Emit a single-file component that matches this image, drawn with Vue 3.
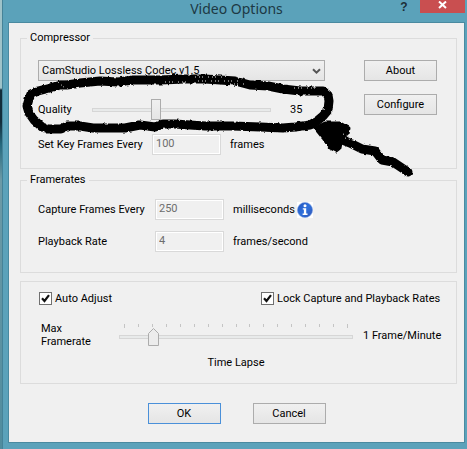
<script setup>
import { ref } from 'vue'

const codecs = ['CamStudio Lossless Codec v1.5', 'Microsoft Video 1', 'Cinepak Codec']
const codec = ref(codecs[0])
const quality = ref(35)
const keyFrames = ref(100)
const captureEvery = ref(250)
const playbackRate = ref(4)
const autoAdjust = ref(true)
const lockRates = ref(true)
const maxFramerate = ref(2)
</script>

<template>
	<div class="desktop">
		<div class="window">
			<header class="title-bar">
				<h1>Video Options</h1>
				<div class="window-buttons">
					<button type="button" class="help">?</button>
					<button type="button" class="close" aria-label="Close">
						<svg width="9" height="8" viewBox="0 0 9 8">
							<path d="M1 0.5L8 7M8 0.5L1 7" stroke="#fff" stroke-width="2" />
						</svg>
					</button>
				</div>
			</header>

			<form class="panel" @submit.prevent>
				<fieldset class="compressor">
					<legend>Compressor</legend>
					<div class="columns">
						<div class="settings">
							<div class="combo">
								<select v-model="codec" aria-label="Codec">
									<option v-for="name in codecs" :key="name">{{ name }}</option>
								</select>
								<svg class="chevron" width="9" height="7" viewBox="0 0 9 7">
									<path d="M1 1.2L4.5 4.7L8 1.2" fill="none" stroke="#555" stroke-width="2" />
								</svg>
							</div>
							<div class="row quality">
								<label for="quality">Quality</label>
								<input id="quality" type="range" min="0" max="100" v-model="quality" />
								<output for="quality">{{ quality }}</output>
							</div>
							<div class="row key-frames">
								<label for="keyFrames">Set Key Frames Every</label>
								<input id="keyFrames" type="text" v-model="keyFrames" disabled />
								<span>frames</span>
							</div>
						</div>
						<div class="actions">
							<button type="button">About</button>
							<button type="button">Configure</button>
						</div>
					</div>
				</fieldset>

				<fieldset class="framerates">
					<legend>Framerates</legend>
					<div class="row">
						<label for="capture">Capture Frames Every</label>
						<input id="capture" type="text" v-model="captureEvery" disabled />
						<span class="unit">milliseconds</span>
						<svg class="info" width="16" height="16" viewBox="0 0 16 16">
							<defs>
								<linearGradient id="infoFill" x1="0" y1="0" x2="1" y2="1">
									<stop offset="0" stop-color="#2454bd" />
									<stop offset="0.5" stop-color="#2f70dc" />
									<stop offset="1" stop-color="#3155b5" />
								</linearGradient>
							</defs>
							<rect width="16" height="16" fill="#fff" />
							<circle cx="8" cy="8" r="7.6" fill="url(#infoFill)" stroke="#7da0df" stroke-width="0.6" />
							<circle cx="8" cy="3.8" r="1.5" fill="#fff" />
							<path d="M5.8 6.3H9.2V11.6H10.5V13H5.6V11.6H6.9V7.6H5.8Z" fill="#fff" />
						</svg>
					</div>
					<div class="row">
						<label for="playback">Playback Rate</label>
						<input id="playback" type="text" v-model="playbackRate" disabled />
						<span>frames/second</span>
					</div>
				</fieldset>

				<fieldset class="adjust">
					<div class="checks">
						<label><input type="checkbox" v-model="autoAdjust" />Auto Adjust</label>
						<label class="lock"><input type="checkbox" v-model="lockRates" />Lock Capture and Playback Rates</label>
					</div>
					<div class="lapse">
						<label for="maxRate">Max<br />Framerate</label>
						<div class="scale">
							<div class="ticks">
								<i v-for="n in 17" :key="n"></i>
							</div>
							<input id="maxRate" class="pointed" type="range" min="0" max="16" v-model="maxFramerate" />
						</div>
						<span>1 Frame/Minute</span>
					</div>
					<p>Time Lapse</p>
				</fieldset>

				<div class="footer">
					<button type="submit" class="default">OK</button>
					<button type="button">Cancel</button>
				</div>
			</form>

			<!-- marker drawn over the quality slider -->
			<svg class="marker" width="400" height="110" viewBox="20 70 400 110">
				<defs>
					<filter id="rough" x="-5%" y="-10%" width="110%" height="120%">
						<feTurbulence type="fractalNoise" baseFrequency="0.3" numOctaves="2" seed="4" />
						<feDisplacementMap in="SourceGraphic" scale="3" xChannelSelector="R" yChannelSelector="G" />
					</filter>
				</defs>
				<g filter="url(#rough)" stroke-linejoin="round" stroke-linecap="round">
					<path
						class="ink"
						d="M31 94L38 91L50 88L60 85L67 85L80 83L100 81L118 82L133 80L160 80L185 79L205 79L220 80L235 81L250 85L268 86L283 89L300 91L323 91L328 95L329 101L328 110L323 116L317 121L310 125L295 127L283 128L260 127L233 126L205 126L190 125L175 124L163 124L155 127L140 125L125 128L112 128L93 128L80 126L67 126L61 129L48 129L42 127L34 120L29 113L27 106L29 99Z"
					/>
					<path
						class="head"
						d="M315 128L325 123L340 123L349 128L348 134L342 138L340 148L336 151L330 148L323 138Z"
					/>
					<path class="ink" d="M340 139L350 143L362 149L375 151L382 160L393 162L402 168L408 172" />
				</g>
				<path
					class="grain"
					d="M195 77H225M198 81H238M230 84H244M58 82L66 89M343 134L354 138M345 138L356 141M294 88H318M165 82H190"
				/>
			</svg>
		</div>
	</div>
</template>

<style>
body {
	margin: 0;
	background: #5ba2ba;
}
</style>

<style scoped>
.desktop {
	box-sizing: border-box;
	min-height: 100vh;
	padding-left: 2px;
	background: linear-gradient(#9fc3c9 0 88px, #122c3a 90px 122px, #26697e 145px, #6d9aa6 180px, #508c9e);
	font-family: Roboto, "Liberation Sans", sans-serif;
	font-size: 11px;
	line-height: 13px;
	color: #000;
}
.window {
	box-sizing: border-box;
	position: relative;
	min-height: 100vh;
	padding: 0 2px 6px 6px;
	background: #5ba2ba;
	box-shadow: inset 1px 0 #458398;
}
.title-bar {
	position: relative;
	height: 22px;
}
h1 {
	margin: 0;
	font: 14px/18px "Noto Sans", "Open Sans", sans-serif;
	text-align: center;
	color: #1d3944;
}
.window-buttons {
	position: absolute;
	top: 0;
	right: 0;
	display: flex;
	gap: 8px;
}
.window-buttons button {
	width: 45px;
	height: 13px;
	padding: 0;
	border: none;
	background: #c94f50;
	line-height: 0;
}
.window-buttons .help {
	width: 16px;
	background: none;
	font: bold 12px/12px "Liberation Sans", sans-serif;
	color: #1d2f38;
}
.close svg {
	margin-bottom: 3px;
}
.panel {
	padding: 8px 7px 18px 11px;
	border: 1px solid #4a8aa0;
	background: #f0f0f0;
}
fieldset {
	min-width: 0;
	margin: 0;
	border: 1px solid #dcdcdc;
}
legend {
	margin-left: -11px;
	padding: 0 3px;
	line-height: 14px;
}
button {
	box-sizing: border-box;
	width: 73px;
	height: 21px;
	padding: 0;
	border: 1px solid #acacac;
	background: linear-gradient(#f0f0f0, #e5e5e5);
	font: inherit;
	color: #000;
}
button.default {
	border-color: #4a90d9;
}
.compressor {
	padding: 15px 19px 13px 17px;
}
.columns {
	display: flex;
	gap: 39px;
}
.settings {
	flex: 1;
	min-width: 0;
}
.actions {
	display: flex;
	flex-direction: column;
	gap: 13px;
}
.combo {
	position: relative;
	height: 21px;
}
select {
	box-sizing: border-box;
	width: 100%;
	height: 21px;
	padding: 0 20px 0 3px;
	border: 1px solid #acacac;
	border-radius: 0;
	appearance: none;
	background: linear-gradient(#f0f0f0, #e5e5e5);
	font: inherit;
	color: #000;
}
.chevron {
	position: absolute;
	right: 4px;
	top: 8px;
}
.row {
	display: flex;
	align-items: center;
	height: 21px;
}
.quality {
	margin: 18px 0 14px;
}
.quality label {
	width: 54px;
}
.quality output {
	box-sizing: border-box;
	width: 54px;
	padding-left: 19px;
}
.key-frames label {
	width: 114px;
}
input[type="text"] {
	box-sizing: border-box;
	width: 69px;
	height: 21px;
	margin: 0 9px 0 0;
	padding: 0 3px 2px;
	border: 1px solid #d9d9d9;
	background: #f0f0f0;
	box-shadow: inset 0 0 0 1px #fff;
	font: inherit;
	color: #6d6d6d;
}
input[type="range"] {
	flex: 1;
	min-width: 0;
	height: 21px;
	margin: 0;
	appearance: none;
	background: none;
}
input[type="range"]::-webkit-slider-runnable-track {
	box-sizing: border-box;
	height: 4px;
	border: 1px solid #d6d6d6;
	background: #e8eaea;
}
input[type="range"]::-webkit-slider-thumb {
	box-sizing: border-box;
	width: 10px;
	height: 21px;
	margin-top: -10px;
	border: 1px solid #acacac;
	appearance: none;
	background: linear-gradient(#f0f0f0, #e5e5e5);
}
.framerates {
	margin-top: 4px;
	padding: 12px 19px 20px 17px;
}
.framerates .row + .row {
	margin-top: 11px;
}
.framerates label {
	width: 117px;
}
.info {
	margin-left: 2px;
}
.adjust {
	margin-top: 8px;
	padding: 10px 15px 14px 18px;
}
.checks {
	display: flex;
}
.checks label {
	display: flex;
	flex: 1;
	align-items: center;
	gap: 3px;
}
.checks .lock {
	flex: none;
	width: 180px;
}
input[type="checkbox"] {
	box-sizing: border-box;
	width: 13px;
	height: 13px;
	margin: 0;
	border: 1px solid #707070;
	appearance: none;
	background: #fff;
}
input[type="checkbox"]:checked {
	background: #fff url("data:image/svg+xml,%3Csvg xmlns='http://www.w3.org/2000/svg' viewBox='0 0 11 11'%3E%3Cpath d='M2 5.2L4.5 8L9 2.2' fill='none' stroke='%23111' stroke-width='2.2'/%3E%3C/svg%3E");
}
.lapse {
	display: flex;
	align-items: center;
	margin-top: 17px;
	padding-left: 2px;
}
.lapse label {
	width: 78px;
}
.scale {
	flex: 1;
	min-width: 0;
}
.ticks {
	display: flex;
	justify-content: space-between;
	padding: 0 5px;
}
.ticks i {
	width: 1px;
	height: 3px;
	background: #c4c4c4;
}
.ticks i:first-child,
.ticks i:last-child {
	height: 4px;
}
.scale .pointed {
	display: block;
	width: 100%;
	height: 18px;
}
.scale .pointed::-webkit-slider-thumb {
	width: 11px;
	height: 18px;
	margin-top: -8px;
	border: none;
	background: url("data:image/svg+xml,%3Csvg xmlns='http://www.w3.org/2000/svg' viewBox='0 0 11 18'%3E%3Cpath d='M.5 17.5V5.5L5.5.5L10.5 5.5V17.5Z' fill='%23ececec' stroke='%23acacac'/%3E%3C/svg%3E");
}
.lapse span {
	width: 78px;
	padding-left: 10px;
	white-space: nowrap;
}
.adjust p {
	margin: 8px 0 0;
	padding-right: 8px;
	text-align: center;
}
.footer {
	display: flex;
	justify-content: center;
	gap: 32px;
	margin-top: 19px;
	padding-right: 4px;
}
.marker {
	position: absolute;
	left: 18px;
	top: 70px;
	pointer-events: none;
}
.ink {
	fill: none;
	stroke: #000;
	stroke-width: 9;
}
.head {
	fill: #000;
	stroke: #000;
	stroke-width: 3;
}
.grain {
	fill: none;
	stroke: #e8e8e8;
	stroke-width: 1;
	stroke-dasharray: 1 3 1 2 1 5;
}
</style>
